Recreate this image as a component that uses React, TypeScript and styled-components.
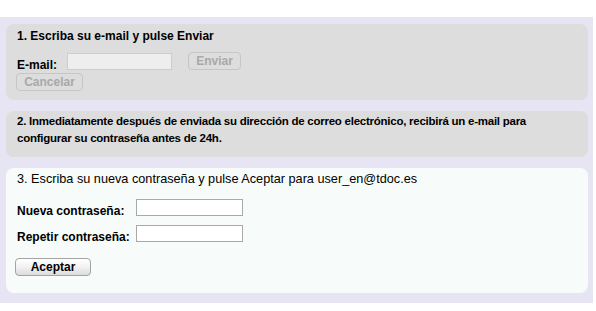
import React from "react";
import styled, { createGlobalStyle } from "styled-components";

const Global = createGlobalStyle`
  html, body { margin: 0; padding: 0; background: #ffffff; }
  body { font-family: "Liberation Sans", Arial, sans-serif; font-size: 12px; color: #000; }
`;

const Page = styled.div`
  padding-top: 17px;
  width: 596px;
`;

const Band = styled.div`
  width: 593px;
  background: #e7e5f3;
  padding: 7px 0 10px 0;
  display: flex;
  flex-direction: column;
  gap: 11px;
  box-sizing: border-box;
`;

const Panel = styled.div<{ $light?: boolean; $pad: string }>`
  margin-left: 6px;
  width: 582px;
  box-sizing: border-box;
  border-radius: 8px;
  background: ${(p) => (p.$light ? "#f7fbfa" : "#dcdddc")};
  padding: ${(p) => p.$pad};
`;

const Heading = styled.div<{ $size: number; $bold?: boolean; $lh: number; $ls?: number }>`
  font-size: ${(p) => p.$size}px;
  font-weight: ${(p) => (p.$bold ? "bold" : "normal")};
  line-height: ${(p) => p.$lh}px;
  letter-spacing: ${(p) => p.$ls ?? 0}px;
`;

const Row = styled.div<{ $top: number; $h: number }>`
  display: flex;
  align-items: flex-start;
  height: ${(p) => p.$h}px;
  margin-top: ${(p) => p.$top}px;
`;

const Label = styled.span<{ $w: number; $top: number }>`
  font-weight: bold;
  font-size: 12px;
  line-height: 12px;
  width: ${(p) => p.$w}px;
  padding-top: ${(p) => p.$top}px;
  flex: none;
`;

const Input = styled.input<{ $disabled?: boolean; $w: number; $top?: number }>`
  box-sizing: border-box;
  width: ${(p) => p.$w}px;
  height: 17px;
  margin: ${(p) => p.$top ?? 0}px 0 0 0;
  padding: 0 2px;
  border: 1px solid ${(p) => (p.$disabled ? "#cdcdcd" : "#a9a9a9")};
  background: ${(p) => (p.$disabled ? "#eeeeee" : "#ffffff")};
  font: inherit;
  outline: none;
`;

const GhostButton = styled.button<{ $w: number; $left?: number }>`
  box-sizing: border-box;
  width: ${(p) => p.$w}px;
  height: 18px;
  margin: 0 0 0 ${(p) => p.$left ?? 0}px;
  padding: 0;
  border: 1px solid #c6c6c6;
  border-radius: 4px;
  background: #dcdddc;
  color: #a9a9a9;
  font: bold 12px "Liberation Sans", Arial, sans-serif;
  line-height: 16px;
`;

const MainButton = styled.button`
  box-sizing: border-box;
  width: 76px;
  height: 18px;
  margin: 0 0 0 -2px;
  padding: 0;
  border: 1px solid #a3a3a3;
  border-radius: 4px;
  background: linear-gradient(#ffffff, #f3f3f3 45%, #dcdcdc);
  color: #000;
  font: bold 12px "Liberation Sans", Arial, sans-serif;
  line-height: 16px;
`;

export default function App() {
  return (
    <>
      <Global />
      <Page>
        <Band>
          <Panel $pad="5px 11px 9px 11px">
            <Heading $size={12} $lh={14} $bold>
              1. Escriba su e-mail y pulse Enviar
            </Heading>
            <Row $top={9} $h={18}>
              <Label $w={50} $top={7}>E-mail:</Label>
              <Input $disabled $w={105} $top={1} disabled />
              <GhostButton $w={53} $left={16} disabled>Enviar</GhostButton>
            </Row>
            <Row $top={3} $h={18}>
              <GhostButton $w={67} $left={-1} disabled>Cancelar</GhostButton>
            </Row>
          </Panel>
          <Panel $pad="2px 11px 10px 11px">
            <Heading $size={11.5} $lh={17} $ls={-0.25} $bold>
              2. Inmediatamente después de enviada su dirección de correo electrónico, recibirá un e-mail para
              configurar su contraseña antes de 24h.
            </Heading>
          </Panel>
          <Panel $light $pad="3px 11px 17px 11px">
            <Heading $size={12.7} $lh={16}>
              3. Escriba su nueva contraseña y pulse Aceptar para user_en@tdoc.es
            </Heading>
            <Row $top={12} $h={17}>
              <Label $w={119} $top={6}>Nueva contraseña:</Label>
              <Input $w={107} />
            </Row>
            <Row $top={9} $h={17}>
              <Label $w={119} $top={6}>Repetir contraseña:</Label>
              <Input $w={107} />
            </Row>
            <Row $top={16} $h={18}>
              <MainButton>Aceptar</MainButton>
            </Row>
          </Panel>
        </Band>
      </Page>
    </>
  );
}
